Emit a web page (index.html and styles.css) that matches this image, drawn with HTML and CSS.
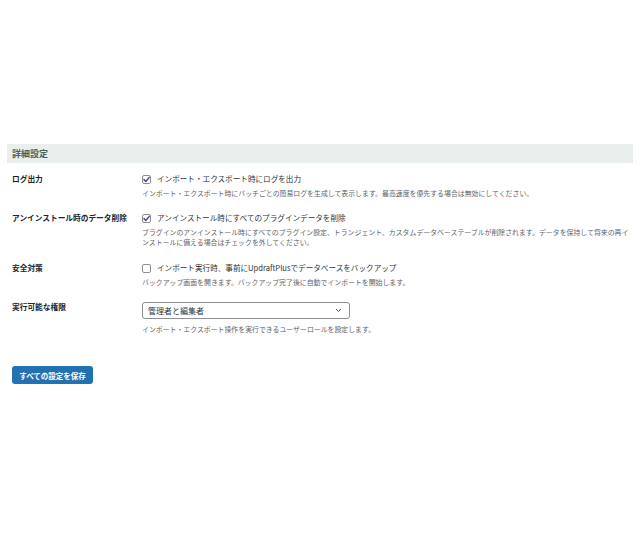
FILE: index.html
```html
<!DOCTYPE html>
<html lang="ja">
<head>
<meta charset="utf-8">
<title>詳細設定</title>
<link rel="stylesheet" href="styles.css">
</head>
<body>
<div class="page">
  <div class="section-head">詳細設定</div>
  <div class="rows">
    <div class="row">
      <div class="label">ログ出力</div>
      <div class="field">
        <label class="check"><span class="box"><svg viewBox="0 0 9 9" width="9" height="9"><path d="M2 4.6 L3.9 6.5 L7.2 2.4" fill="none" stroke="#5e3f96" stroke-width="1.5" stroke-linecap="round" stroke-linejoin="round"/></svg></span>インポート・エクスポート時にログを出力</label>
        <p class="desc">インポート・エクスポート時にバッチごとの簡易ログを生成して表示します。最高速度を優先する場合は無効にしてください。</p>
      </div>
    </div>
    <div class="row">
      <div class="label">アンインストール時のデータ削除</div>
      <div class="field">
        <label class="check"><span class="box"><svg viewBox="0 0 9 9" width="9" height="9"><path d="M2 4.6 L3.9 6.5 L7.2 2.4" fill="none" stroke="#5e3f96" stroke-width="1.5" stroke-linecap="round" stroke-linejoin="round"/></svg></span>アンインストール時にすべてのプラグインデータを削除</label>
        <p class="desc">プラグインのアンインストール時にすべてのプラグイン設定、トランジェント、カスタムデータベーステーブルが削除されます。データを保持して将来の再インストールに備える場合はチェックを外してください。</p>
      </div>
    </div>
    <div class="row row-safe">
      <div class="label">安全対策</div>
      <div class="field">
        <label class="check"><span class="box"></span>インポート実行時、事前にUpdraftPlusでデータベースをバックアップ</label>
        <p class="desc">バックアップ画面を開きます。バックアップ完了後に自動でインポートを開始します。</p>
      </div>
    </div>
    <div class="row">
      <div class="label">実行可能な権限</div>
      <div class="field">
        <div class="select"><span>管理者と編集者</span><svg viewBox="0 0 7 5" width="7" height="5"><path d="M1 1 L3.5 3.5 L6 1" fill="none" stroke="#50575e" stroke-width="1"/></svg></div>
        <p class="desc desc-select">インポート・エクスポート操作を実行できるユーザーロールを設定します。</p>
      </div>
    </div>
  </div>
  <button class="save" type="button">すべての設定を保存</button>
</div>
</body>
</html>
```

FILE: styles.css
```css
html, body {
  margin: 0;
  padding: 0;
  background: #ffffff;
}

body {
  font-family: "Noto Sans CJK JP", "Noto Sans", sans-serif;
  color: #1d2327;
}

.page {
  padding: 144px 7px 0;
}

.section-head {
  height: 19px;
  line-height: 19px;
  padding-left: 5px;
  background: #e8efec;
  color: #4b6157;
  font-size: 9px;
  font-weight: 700;
}

.rows {
  display: flex;
  flex-direction: column;
  gap: 15px;
  padding: 11px 0 0 5px;
}

.row-safe {
  margin-top: 1px;
}

.row {
  display: grid;
  grid-template-columns: 130px 491px;
}

.label {
  font-size: 7.7px;
  line-height: 10px;
  font-weight: 700;
  color: #1d2327;
}

.check {
  display: flex;
  align-items: center;
  height: 10px;
  font-size: 7.6px;
  line-height: 10px;
  color: #2c3338;
}

.box {
  box-sizing: border-box;
  width: 9px;
  height: 9px;
  margin-right: 6px;
  border: 1px solid #8c8f94;
  border-radius: 2px;
  background: #fff;
  display: flex;
  align-items: center;
  justify-content: center;
  flex: none;
}

.box svg {
  display: block;
  margin: -1px;
}

.desc {
  margin: 4px 0 0;
  font-size: 6.9px;
  line-height: 10px;
  color: #5f6368;
}

.desc-select {
  margin-top: 5px;
}

.select {
  box-sizing: border-box;
  width: 208px;
  height: 17px;
  border: 1px solid #8c8f94;
  border-radius: 3px;
  padding: 0 7px 0 5px;
  display: flex;
  align-items: center;
  justify-content: space-between;
  font-size: 8px;
  color: #2c3338;
}

.save {
  display: block;
  margin: 32px 0 0 5px;
  width: 81px;
  height: 18px;
  padding: 0;
  border: none;
  border-radius: 3px;
  background: #2271b1;
  color: #ffffff;
  font-family: "Noto Sans CJK JP", "Noto Sans", sans-serif;
  font-size: 7.5px;
  font-weight: 700;
}
```
